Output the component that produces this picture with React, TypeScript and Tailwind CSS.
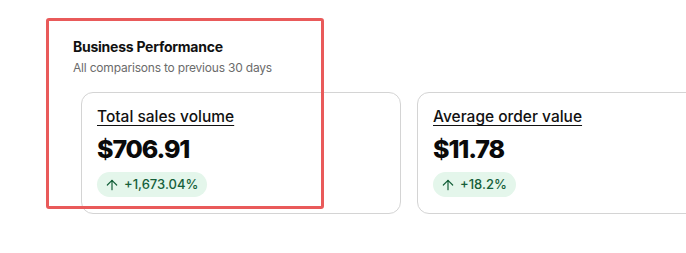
import { ArrowUp } from 'lucide-react';

interface Metric {
  label: string;
  value: string;
  change: string;
}

const metrics: Metric[] = [
  { label: 'Total sales volume', value: '$706.91', change: '+1,673.04%' },
  { label: 'Average order value', value: '$11.78', change: '+18.2%' },
];

function MetricCard({ metric }: { metric: Metric }) {
  return (
    <div className="w-[320px] h-[122px] shrink-0 rounded-[12px] border border-[#d4d4d4] bg-white pl-[15px] pt-[14px]">
      <div className="text-[15.5px] leading-[20px] font-medium text-[#111] underline underline-offset-[3px] decoration-[1px]">
        {metric.label}
      </div>
      <div className="mt-[6px] text-[25px] leading-[32px] font-extrabold tracking-[-1.1px] text-[#0a0a0a]">
        {metric.value}
      </div>
      <div className="mt-[7px] inline-flex h-[25px] items-center gap-[4px] rounded-full bg-[#e4f6eb] pl-[7px] pr-[9px]">
        <ArrowUp className="h-[16px] w-[16px] text-[#15603a]" strokeWidth={1.8} />
        <span className="text-[13px] leading-none font-medium text-[#15603a]">{metric.change}</span>
      </div>
    </div>
  );
}

export default function App() {
  return (
    <div
      className="relative w-[686px] h-[253px] overflow-hidden bg-white"
      style={{ fontFamily: 'Inter, "Noto Sans", sans-serif' }}
    >
      <div className="pl-[73px] pt-[37px]">
        <h2 className="text-[14px] leading-[20px] font-bold tracking-[-0.25px] text-[#111]">Business Performance</h2>
        <p className="mt-[3px] text-[12px] leading-[16px] tracking-[-0.2px] text-[#6b6b6b]">All comparisons to previous 30 days</p>
        <div className="mt-[16px] ml-[8px] flex gap-[16px]">
          {metrics.map(m => (
            <MetricCard key={m.label} metric={m} />
          ))}
        </div>
      </div>

      {/* highlight annotation */}
      <div className="absolute left-[46px] top-[18px] w-[278px] h-[191px] rounded-[3px] border-[3px] border-[#e95a5a] pointer-events-none" />
    </div>
  );
}
